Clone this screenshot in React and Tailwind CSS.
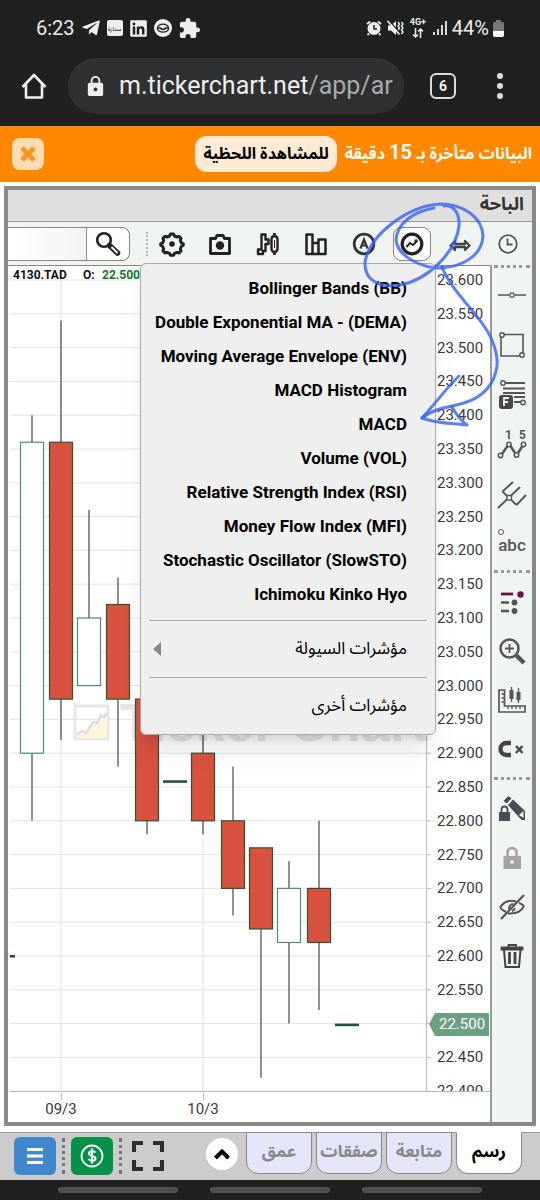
/**
 * شاشة الرسم البياني - TickerChart Mobile
 */

import { useState } from 'react';
import { FaTelegramPlane, FaLinkedin } from 'react-icons/fa';
import { MdExtension, MdLock } from 'react-icons/md';

const indicators = [
  'Bollinger Bands (BB)',
  'Double Exponential MA - (DEMA)',
  'Moving Average Envelope (ENV)',
  'MACD Histogram',
  'MACD',
  'Volume (VOL)',
  'Relative Strength Index (RSI)',
  'Money Flow Index (MFI)',
  'Stochastic Oscillator (SlowSTO)',
  'Ichimoku Kinko Hyo'
];

// x is the centre of the candle
const candles = [
  { x: 24, open: 22.9, close: 23.36, high: 23.4, low: 22.8 },
  { x: 53, open: 23.36, close: 22.98, high: 23.54, low: 22.92 },
  { x: 81, open: 23.0, close: 23.1, high: 23.26, low: 23.0 },
  { x: 110, open: 23.12, close: 22.98, high: 23.16, low: 22.88 },
  { x: 139, open: 22.98, close: 22.8, high: 23.0, low: 22.78 },
  { x: 167, open: 22.86, close: 22.86, high: 22.86, low: 22.86 },
  { x: 195, open: 22.9, close: 22.8, high: 22.98, low: 22.78 },
  { x: 225, open: 22.8, close: 22.7, high: 22.88, low: 22.66 },
  { x: 253, open: 22.76, close: 22.64, high: 22.76, low: 22.42 },
  { x: 281, open: 22.62, close: 22.7, high: 22.74, low: 22.5 },
  { x: 311, open: 22.7, close: 22.62, high: 22.8, low: 22.52 },
  { x: 339, open: 22.5, close: 22.5, high: 22.5, low: 22.5 }
];

const prices = Array.from({ length: 25 }, (_, i) => 23.6 - i * 0.05);
const priceY = (price) => 15 + (23.6 - price) * 676;

const Icon = ({ size = 28, box = 28, children, className = '' }) => (
  <svg
    width={size}
    height={size}
    viewBox={`0 0 ${box} ${box}`}
    fill="none"
    stroke="currentColor"
    strokeWidth="2"
    className={className}
    aria-hidden="true"
  >
    {children}
  </svg>
);

const toolbarItems = [
  {
    label: 'الإعدادات',
    icon: (
      <Icon>
        <path
          d="M12.500 4h3l1 2 2.500 1 2-.700 2 2-.700 2 1 2.500 2 1v1.500l-2 1.200-1 2.500.700 2-2 2-2-.700-2.500 1-1 2h-3l-1-2-2.500-1-2 .700-2-2 .700-2-1-2.500-2-1.200v-1.500l2-1 1-2.500-.700-2 2-2 2 .700 2.500-1z"
          strokeWidth="3"
          strokeLinejoin="round"
        />
        <circle cx="14" cy="14" r="2.800" fill="currentColor" stroke="none" />
      </Icon>
    )
  },
  {
    label: 'التقاط صورة',
    icon: (
      <Icon>
        <path d="M4.500 8.500h5l1.500-3h6l1.500 3h5v15h-19z" strokeWidth="2.800" strokeLinejoin="round" />
        <circle cx="14" cy="15.500" r="4.200" fill="currentColor" stroke="none" />
      </Icon>
    )
  },
  {
    label: 'نوع الرسم',
    icon: (
      <Icon>
        <path
          d="M7.500 4.500h4v5h3v4.500h-3v7H9v3H4v-4.500h3.500z"
          strokeWidth="2.400"
          strokeLinejoin="round"
        />
        <path d="M20.500 3v3M20.500 22v3" strokeWidth="2.600" />
        <rect x="17.500" y="6" width="6" height="16" rx="3" strokeWidth="2.400" />
        <path d="M20.500 10v8" strokeWidth="1" />
      </Icon>
    )
  },
  {
    label: 'الفترة',
    icon: (
      <Icon>
        <path
          d="M4.500 4.500h6v19.500h-6zM10.500 13h6v11h-6zM16.500 9.500h7v14.500h-7z"
          strokeWidth="2.500"
          strokeLinejoin="round"
        />
      </Icon>
    )
  },
  {
    label: 'تحليل آلي',
    icon: (
      <Icon className="text-[#333]">
        <circle cx="14" cy="14" r="9.800" strokeWidth="2.800" />
        <path d="M10.500 18.500l3.500-9 3.500 9M11.500 15.500h5" strokeWidth="2.200" />
      </Icon>
    )
  },
  {
    label: 'المؤشرات',
    active: true,
    icon: (
      <Icon>
        <circle cx="14" cy="14" r="9.800" strokeWidth="3.200" />
        <path d="M8.500 17l3.500-4 3 2 4.500-4.500M16.500 10.500h3" strokeWidth="1.900" />
      </Icon>
    )
  },
  {
    label: 'تمديد',
    icon: (
      <Icon className="text-[#444]">
        <path
          d="M4.500 15.500l4.500-4.500v3h10v-3l4.500 4.500-4.500 4.500v-3H9v3z"
          strokeWidth="2.300"
          strokeLinejoin="round"
        />
      </Icon>
    )
  },
  {
    label: 'الوقت',
    icon: (
      <Icon className="text-[#555]">
        <circle cx="14" cy="14" r="8.800" strokeWidth="1.800" />
        <path d="M13.500 8.500v6h5" strokeWidth="1.800" />
      </Icon>
    )
  }
];

const sideGroups = [
  [
    {
      label: 'خط',
      icon: (
        <Icon size={32} box={32}>
          <path d="M2 16h11M19 16h11" strokeWidth="1.600" />
          <circle cx="16" cy="16" r="2.200" strokeWidth="1.300" />
        </Icon>
      )
    },
    {
      label: 'مستطيل',
      icon: (
        <Icon size={32} box={32}>
          <path d="M8 5.500h19v18.500M24 27H5V8" strokeWidth="1.600" />
          <circle cx="6" cy="6" r="2.200" strokeWidth="1.400" />
          <circle cx="26" cy="26" r="2.200" strokeWidth="1.400" />
        </Icon>
      )
    },
    {
      label: 'فيبوناتشي',
      icon: (
        <Icon size={32} box={32}>
          <path d="M9 4h20M7 9.500h22M7 14h22M18 18h11M18 23h7" strokeWidth="1.800" />
          <circle cx="7" cy="4" r="2.200" strokeWidth="1.400" />
          <circle cx="27" cy="23.500" r="2.200" strokeWidth="1.400" />
          <rect x="3" y="16" width="14" height="14" rx="3" fill="#484848" stroke="none" />
          <path d="M8 27v-8h5M8 23h4" stroke="#f1f5f1" strokeWidth="1.800" />
        </Icon>
      )
    },
    {
      label: 'موجات',
      icon: (
        <Icon size={32} box={32}>
          <path d="M6 25l5.500-8M14.500 17l4.500 7M22 24l4.500-7" strokeWidth="2.400" />
          <circle cx="4.500" cy="26.500" r="2.200" strokeWidth="1.500" />
          <circle cx="13" cy="15.500" r="2.200" strokeWidth="1.500" />
          <circle cx="20.500" cy="26" r="2.200" strokeWidth="1.500" />
          <circle cx="27.500" cy="15.500" r="2.200" strokeWidth="1.500" />
          <text x="9" y="10" fontSize="12" fontWeight="700" fill="currentColor" stroke="none">1</text>
          <text x="23" y="10" fontSize="12" fontWeight="700" fill="currentColor" stroke="none">5</text>
        </Icon>
      )
    },
    {
      label: 'شوكة',
      icon: (
        <Icon size={32} box={32}>
          <path d="M2 29l22-21M6.500 12.500l14 13.500M6.500 12.500L17 3M20.500 26L30 16" strokeWidth="1.900" />
          <rect x="11" y="16.500" width="4.500" height="4.500" fill="#f1f5f1" strokeWidth="1.400" />
        </Icon>
      )
    },
    {
      label: 'نص',
      icon: (
        <span className="relative text-[17px] leading-none font-medium">
          <span className="absolute -top-2 left-0 size-1.5 rounded-full border border-[#555]" />
          abc
        </span>
      )
    }
  ],
  [
    {
      label: 'الأدوات',
      icon: (
        <Icon size={32} box={32}>
          <path d="M5 8h12" stroke="#6b1049" strokeWidth="2.800" />
          <circle cx="24.500" cy="8.500" r="3.200" fill="#6b1049" stroke="none" />
          <path d="M5 16.500h8M5 25h8" strokeWidth="2.600" />
          <circle cx="18.500" cy="16.500" r="2.900" fill="currentColor" stroke="none" />
          <circle cx="18.500" cy="25" r="2.900" fill="currentColor" stroke="none" />
        </Icon>
      )
    },
    {
      label: 'تكبير',
      icon: (
        <Icon size={32} box={32}>
          <circle cx="13.500" cy="13.500" r="9" strokeWidth="2.500" />
          <path d="M13.500 9v9M9 13.500h9" strokeWidth="1.800" />
          <path d="M20.500 20.500l7.500 7.500" strokeWidth="4.400" />
        </Icon>
      )
    },
    {
      label: 'قياس',
      icon: (
        <Icon size={32} box={32}>
          <path d="M3 6h5.500v16h20.500v6H3z" strokeWidth="1.700" />
          <path d="M5.500 10H8M5.500 14H8M5.500 18H8M12 22v3M16 22v3M20 22v3M24 22v3" strokeWidth="1.300" />
          <path d="M15.500 3v15M22.500 4v15" strokeWidth="1.300" />
          <path d="M15.500 6v9M22.500 8v8" strokeWidth="4" />
        </Icon>
      )
    },
    {
      label: 'مغناطيس',
      icon: (
        <Icon size={32} box={32} className="text-[#444]">
          <path d="M15 10h-4.500a6 6 0 0 0 0 12H15" strokeWidth="4.400" />
          <path d="M20 13l6.500 7M26.500 13l-6.500 7" strokeWidth="2.300" />
        </Icon>
      )
    }
  ],
  [
    {
      label: 'قفل الرسم',
      icon: (
        <Icon size={32} box={32} className="text-[#4a4d55]">
          <path d="M7.500 8l5-5 3 2.500-5 5z" fill="currentColor" stroke="none" />
          <path d="M12 12l5-5.500 12 11.500v9h-3.500z" fill="currentColor" stroke="none" />
          <path d="M23 22l4.500-4v7z" fill="#f1f5f1" stroke="none" />
          <rect x="3" y="19" width="11" height="9" fill="currentColor" stroke="none" />
          <path d="M5.500 19v-2.500a3 3 0 0 1 6 0V19" strokeWidth="1.800" />
        </Icon>
      )
    },
    {
      label: 'قفل',
      icon: (
        <Icon size={32} box={32} className="text-[#a3a3a3]">
          <rect x="7.500" y="14" width="17.500" height="13" fill="currentColor" stroke="none" />
          <path d="M11.500 14v-3.500a4.500 4.500 0 0 1 9 0V14" strokeWidth="2.600" />
          <circle cx="16" cy="20" r="1.800" fill="#f1f5f1" stroke="none" />
        </Icon>
      )
    },
    {
      label: 'إخفاء',
      icon: (
        <Icon size={32} box={32}>
          <path d="M4 16.500c4-6 9-8 16-6M28 15c-3 6-9 8-16 7.500M4 16.500c2 2.500 3.500 3.500 6 4.500M23 12c2 .500 3.500 1.500 5 3" />
          <path d="M5 28L28 4" strokeWidth="2.200" />
          <path d="M13 18c0-3 2-5 4.500-5M19 17c-.500 1.500-1.500 2.500-3 3" strokeWidth="2.200" />
        </Icon>
      )
    },
    {
      label: 'حذف',
      icon: (
        <Icon size={32} box={32} className="text-[#444]">
          <path d="M5.500 9.500V7.500h21v2zM12.500 7V5h7.500v2" strokeWidth="1.800" />
          <path d="M8 10l1.500 17h13.500l1.500-17" strokeWidth="2" />
          <path d="M13.500 12v12M19 12v12" strokeWidth="2.800" />
        </Icon>
      )
    }
  ]
];

const tabs = ['رسم', 'متابعة', 'صفقات', 'عمق'];

const StatusBar = () => (
  <div className="flex h-14 items-center justify-between pr-9 pl-9 text-[#eee]">
    <div className="flex items-center gap-1.5">
      <span className="text-xl">6:23</span>
      <FaTelegramPlane size={20} />
      <span className="flex size-4 items-center justify-center rounded-xs bg-[#eee] text-[6px] text-black">ستارة</span>
      <FaLinkedin size={19} />
      <Icon size={18} box={18}>
        <circle cx="9" cy="9" r="9" fill="currentColor" stroke="none" />
        <path d="M3.500 8.500c2-4.500 9-4.500 11 0v2c-2 3.500-9 3.500-11 0z" stroke="#202020" strokeWidth="1.200" />
        <path d="M3.500 9h3l1 1.200h3l1-1.200h3" stroke="#202020" strokeWidth="1.600" />
      </Icon>
      <MdExtension size={23} />
    </div>
    <div className="flex items-center gap-1">
      <Icon size={16} box={16}>
        <circle cx="8" cy="8.500" r="6.500" fill="currentColor" stroke="none" />
        <path d="M1 4l3-2.500M15 4l-3-2.500M3 13.500L1.500 15M13 13.500l1.500 1.500" strokeWidth="1.800" />
        <path d="M8 5v4h3" stroke="#202020" strokeWidth="1.500" />
      </Icon>
      <Icon size={18} box={18}>
        <path d="M2 6.500h3l5-4.500v14l-5-4.500H2z" fill="currentColor" stroke="none" />
        <path d="M2.500 1l12 13.500" stroke="#202020" strokeWidth="1.300" />
        <path d="M1.500 2l12 13.500" strokeWidth="1.800" />
        <path d="M12 3l1.500 2-1.500 2 1.500 2-1.500 2M15.500 3L17 5l-1.500 2L17 9l-1.500 2 1.500 2-1.500 2" strokeWidth="1.400" />
      </Icon>
      <span className="flex w-5 flex-col items-center text-[9px] leading-none font-bold">
        4G+
        <Icon size={12} box={12}>
          <path d="M3.500 1v9M1 7.500L3.500 10 6 7.500M8.500 11V2M6 4.500L8.500 2 11 4.500" strokeWidth="1.500" />
        </Icon>
      </span>
      <Icon size={16} box={16}>
        <path d="M2 12v3M6 9v6M10 5v10M14 1v14" strokeWidth="1.800" />
      </Icon>
      <span className="flex items-center gap-1 text-xl">
        44%
        <svg width="11" height="17" viewBox="0 0 11 17" aria-hidden="true">
          <path d="M3 0h5v2h2q1 0 1 1v12q0 2-2 2H2q-2 0-2-2V3q0-1 1-1h2z" fill="#777" />
          <path d="M0 11h11v4q0 2-2 2H2q-2 0-2-2z" fill="#fff" />
        </svg>
      </span>
    </div>
  </div>
);

const AddressBar = () => (
  <div className="flex h-[70px] items-start pt-0.5 pr-8 text-[#eee]">
    <button aria-label="Home" className="flex h-14 w-17 shrink-0 items-center justify-center">
      <Icon>
        <path d="M2.500 15L14 3l11.500 12M6 12v13.500h16V12" strokeWidth="2.600" strokeLinejoin="round" />
      </Icon>
    </button>
    <div className="flex h-14 min-w-0 flex-1 items-center gap-3 rounded-full bg-[#2f3032] pr-2 pl-4">
      <MdLock size={23} className="shrink-0" />
      <span className="overflow-hidden text-[25px] whitespace-nowrap">
        m.tickerchart.net<span className="text-[#aaa]">/app/ar</span>
      </span>
    </div>
    <div className="flex h-14 shrink-0 items-center gap-9 pl-6.5">
      <button aria-label="Tabs" className="flex size-6.5 items-center justify-center rounded-md border-2 border-[#ddd] text-sm font-bold">
        6
      </button>
      <button aria-label="Menu" className="flex w-4 flex-col items-center gap-1">
        <span className="size-1.5 rounded-full bg-[#ddd]" />
        <span className="size-1.5 rounded-full bg-[#ddd]" />
        <span className="size-1.5 rounded-full bg-[#ddd]" />
      </button>
    </div>
  </div>
);

const DelayBanner = () => (
  <div dir="rtl" className="flex h-14 items-center justify-between bg-[#ff8800] pr-2 pl-3 font-bold">
    <div className="flex items-center gap-2">
      <p className="text-base whitespace-nowrap text-white">
        البيانات متأخرة بـ <span className="text-xl leading-none">15</span> دقيقة
      </p>
      <button className="h-9 rounded-xl bg-[#ffead5] px-2 text-base whitespace-nowrap text-black">
        للمشاهدة اللحظية
      </button>
    </div>
    <button aria-label="إغلاق" className="flex size-8 items-center justify-center rounded-lg bg-[#ffdcb2] text-[#ff9420]">
      <Icon size={20} box={20}>
        <path d="M4 4l12 12M16 4L4 16" strokeWidth="5" />
      </Icon>
    </button>
  </div>
);

const Toolbar = () => (
  <div className="flex h-[43px] items-center bg-[#f1f5f1]">
    <div className="flex h-8.5 min-w-0 flex-1 rounded-r-lg border border-l-0 border-[#888] bg-white">
      <input
        aria-label="بحث"
        className="w-20 min-w-0 flex-1 border-r border-[#888] bg-linear-to-r from-white to-[#f1f5f1] outline-none"
      />
      <button aria-label="ابحث" className="flex w-10.5 items-center justify-center text-[#222]">
        <Icon>
          <circle cx="10" cy="10" r="6.800" strokeWidth="2.600" />
          <path d="M15.500 15.500l8 7.500" strokeWidth="5.500" strokeLinecap="round" />
          <path d="M18 17.500l5 5" stroke="#fff" strokeWidth="1.800" strokeLinecap="round" />
        </Icon>
      </button>
    </div>
    <span className="ml-4 h-6 border-l-2 border-dotted border-[#bbb]" />
    {toolbarItems.map((item) => (
      <span key={item.label} className="flex w-12 shrink-0 justify-center">
        <button
          aria-label={item.label}
          className={`flex h-8.5 w-9.5 items-center justify-center text-[#222] ${
            item.active ? 'rounded-lg border border-[#888] bg-[#fafafa]' : ''
          }`}
        >
          {item.icon}
        </button>
      </span>
    ))}
  </div>
);

const Candle = ({ x, open, close, high, low }) => {
  if (open === close) {
    return <rect x={x - 12} y={priceY(open)} width="24" height="2.600" fill="#1d5440" />;
  }
  const falling = close < open;
  const top = priceY(Math.max(open, close));
  const bottom = priceY(Math.min(open, close));
  return (
    <g>
      <path
        d={`M${x} ${priceY(high)}V${top}M${x} ${bottom}V${priceY(low)}`}
        stroke="#555"
        strokeWidth="1.300"
      />
      <rect
        x={x - 11.5}
        y={top}
        width="23"
        height={bottom - top}
        fill={falling ? '#d95240' : '#fff'}
        stroke={falling ? '#34512c' : '#4b9072'}
        strokeWidth="1.200"
      />
    </g>
  );
};

const PriceChart = () => (
  <svg viewBox="0 0 482 857" className="block h-auto w-full bg-white" role="img" aria-label="4130.TAD">
    <defs>
      <clipPath id="price-area">
        <rect width="482" height="826" />
      </clipPath>
    </defs>

    <g clipPath="url(#price-area)">
      {/* Grid */}
      {prices.map((price) => (
        <path key={price} d={`M2 ${priceY(price)}H418`} stroke="#e4e4e4" />
      ))}
      <path d="M53 0V826M195 0V826" stroke="#e0e0e0" />

      {/* Watermark */}
      <rect x="67" y="441" width="33" height="33" fill="none" stroke="#e8e8e8" strokeWidth="3" />
      <path d="M69 469l5-3 4 2 7-11 4 1 4-8 3 2 3-4v25H69z" fill="#fdf6dc" />
      <path d="M69 469l5-3 4 2 7-11 4 1 4-8 3 2 3-4" fill="none" stroke="#dedede" strokeWidth="2.500" />
      <text x="112" y="476" fontSize="53" fontWeight="700" fill="#e6e6e6" fontFamily="Liberation Sans, sans-serif">
        Ticker Chart
      </text>

      {candles.map((candle) => (
        <Candle key={candle.x} {...candle} />
      ))}
      <rect x="2" y="690" width="5" height="2.600" fill="#1d5440" />

      {/* Price axis */}
      <path d="M418.500 0V826" stroke="#bbb" />
      {prices.map((price) => (
        <g key={price}>
          <path d={`M419 ${priceY(price)}h4`} stroke="#bbb" />
          <text x="429" y={priceY(price) + 5} fontSize="15" fill="#3a3a3a">
            {price.toFixed(3)}
          </text>
        </g>
      ))}
      <path d="M421 759l6-11h54v23h-54z" fill="#6ba083" />
      <text x="431" y="764" fontSize="15" fill="#fff">22.500</text>
    </g>

    {/* Time axis */}
    <path d="M2 826.500H482M53.500 828v7M195.500 828v7" stroke="#bbb" />
    <g fontSize="15" fill="#3a3a3a" textAnchor="middle">
      <text x="53" y="849">09/3</text>
      <text x="195" y="849">10/3</text>
    </g>

    <path d="M0 .500H482" stroke="#888" />
    <g fontSize="12" fontWeight="700">
      <text x="5" y="14" fill="#111">4130.TAD</text>
      <text x="75" y="14" fill="#111">O:</text>
      <text x="94" y="14" fill="#0b7a1c">22.500</text>
    </g>
  </svg>
);

const IndicatorMenu = () => (
  <div
    dir="rtl"
    className="absolute top-[41px] right-24 w-74 rounded-md border border-[#aaa] bg-[#efefef] pt-2 text-[17px] text-black shadow-xl"
  >
    <ul>
      {indicators.map((name) => (
        <li key={name}>
          <button dir="ltr" className="h-[34px] w-full pr-7 text-right font-bold whitespace-nowrap">
            {name}
          </button>
        </li>
      ))}
    </ul>
    <div className="mx-2 mt-2 border-t border-[#aaa]">
      <button className="flex h-14 w-full items-center justify-between pr-5 pl-1">
        مؤشرات السيولة
        <svg width="8" height="14" viewBox="0 0 8 14" aria-hidden="true">
          <path d="M8 0v14L0 7z" fill="#888" />
        </svg>
      </button>
    </div>
    <div className="mx-2 border-t border-[#aaa]">
      <button className="flex h-14 w-full items-center pr-5">مؤشرات أخرى</button>
    </div>
  </div>
);

const SideTools = () => (
  <div className="w-[42px] shrink-0 border-l-2 border-[#999] bg-[#f1f5f1] text-[#555]">
    {sideGroups.map((group, index) => (
      <div key={index} className={`mx-0.5 border-t-3 border-dotted border-[#999] ${index > 0 ? 'py-1' : 'pt-0.5'}`}>
        {group.map((tool) => (
          <button
            key={tool.label}
            aria-label={tool.label}
            className={`flex w-full items-center justify-center ${index > 0 ? 'h-[49px]' : 'h-[50px]'}`}
          >
            {tool.icon}
          </button>
        ))}
      </div>
    ))}
  </div>
);

// Freehand pen marks: ring round the indicators button and an arrow to MACD
const PenMarks = () => (
  <svg
    width="144"
    height="230"
    viewBox="360 200 144 230"
    className="pointer-events-none absolute -top-[22px] right-7"
    fill="none"
    stroke="#3560f5"
    strokeOpacity="0.8"
    strokeWidth="3"
    strokeLinecap="round"
    strokeLinejoin="round"
    aria-hidden="true"
  >
    <path d="M434 208C412 212 397 224 396 240C398 258 424 268 440 268C462 267 482 256 483 236C482 216 462 204 440 204C408 206 370 234 365 262C364 282 382 288 400 285C428 280 456 252 459 226C460 212 452 204 444 206" />
    <path d="M442 267C450 288 472 308 484 326C494 340 498 356 497 366C494 388 480 398 464 403C450 407 434 408 422 418" />
    <path d="M459 376C448 386 440 398 422 418C438 424 452 423 467 425C460 420 456 414 452 407" />
  </svg>
);

const BottomBar = () => {
  const [activeTab, setActiveTab] = useState('رسم');

  return (
    <nav className="flex h-12 items-start justify-between border-t border-[#999] bg-[#ccc] pr-4.5 pl-3.5">
      <div className="flex items-center gap-1.5 pt-1">
        <button aria-label="القائمة" className="flex h-9.5 w-10.5 items-center justify-center rounded-md bg-[#3f88cb] text-white">
          <Icon size={20} box={20}>
            <path d="M2 3.500h16M2 10h16M2 16.500h16" strokeWidth="3" />
          </Icon>
        </button>
        <span className="h-9 border-l-3 border-dotted border-[#777]" />
        <button aria-label="التداول" className="flex h-9.5 w-10.5 items-center justify-center rounded-md bg-[#059148] text-white">
          <Icon size={26} box={26}>
            <circle cx="13" cy="13" r="10.500" strokeWidth="1.800" />
            <path d="M16.500 9.500c-1-1.500-6.500-2-6.500 1s6.500 2 6.500 5-5.500 2.500-7 .500M13 5.500v15" strokeWidth="2" />
          </Icon>
        </button>
        <span className="h-9 border-l-3 border-dotted border-[#777]" />
        <button aria-label="ملء الشاشة" className="ml-1 text-[#2c2c2c]">
          <Icon size={32} box={32}>
            <path d="M2 12V3h9M21 3h9v9M30 20v9h-9M11 29H2v-9" strokeWidth="4" />
          </Icon>
        </button>
      </div>
      <div dir="rtl" className="-mt-px flex gap-1">
        {tabs.map((tab) => (
          <button
            key={tab}
            onClick={() => setActiveTab(tab)}
            className={`h-10.5 w-[66px] rounded-b-xl border border-[#888] pb-1 text-[17px] leading-none font-bold ${
              tab === activeTab ? 'border-t-white bg-white text-black' : 'bg-[#e5e5fa] text-[#888]'
            }`}
          >
            {tab}
          </button>
        ))}
        <button aria-label="المزيد" className="mt-1.5 mr-1 flex size-8 items-center justify-center rounded-full bg-white text-black">
          <Icon size={18} box={18}>
            <path d="M2.500 13L9 6.500l6.500 6.500" strokeWidth="4" />
          </Icon>
        </button>
      </div>
    </nav>
  );
};

const App = () => (
  <div className="flex min-h-screen flex-col bg-white font-[Roboto,'Noto_Sans_Arabic','Noto_Sans','DejaVu_Sans',sans-serif]">
    <header className="bg-[#202020]">
      <StatusBar />
      <AddressBar />
    </header>
    <DelayBanner />

    <main className="mx-1 mt-1 mb-1.5 border-4 border-[#898989]">
      <h1 dir="rtl" className="h-8 border-b border-[#999] bg-[#dfdfdf] px-2 text-lg leading-7 font-bold text-[#333]">
        الباحة
      </h1>
      <div className="relative">
        <Toolbar />
        <div className="flex">
          <div className="min-w-0 flex-1">
            <PriceChart />
          </div>
          <SideTools />
        </div>
        <IndicatorMenu />
        <PenMarks />
      </div>
    </main>

    <BottomBar />
    <div className="flex flex-1 items-center justify-center gap-8 bg-[#202020] px-14">
      <span className="h-1.5 w-30 rounded-full bg-[#505050]" />
      <span className="h-1.5 w-30 rounded-full bg-[#505050]" />
      <span className="h-1.5 w-30 rounded-full bg-[#505050]" />
    </div>
  </div>
);

export default App;
